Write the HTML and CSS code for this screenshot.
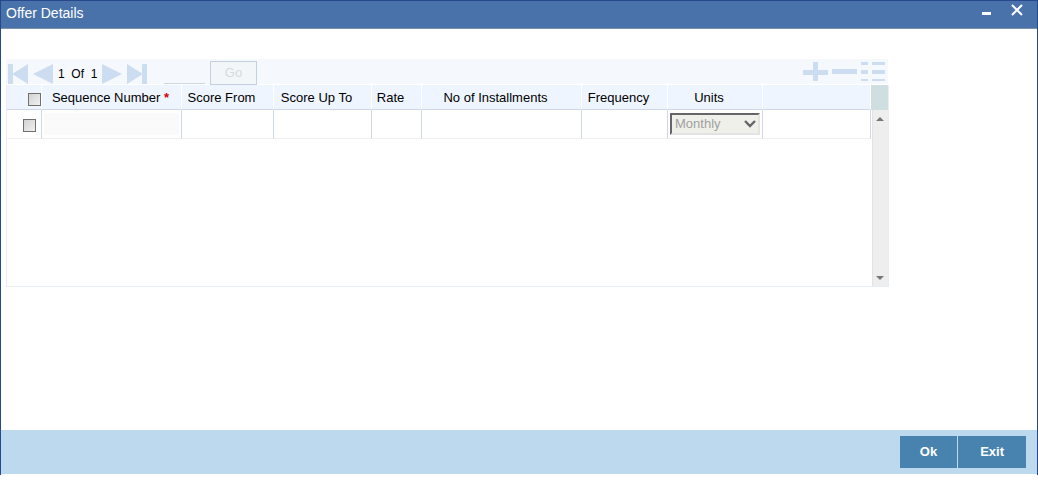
FILE: index.html
```html
<!DOCTYPE html>
<html lang="en">
<head>
  <meta charset="UTF-8" />
  <meta name="viewport" content="width=device-width, initial-scale=1.0"/>
  <title>Offer Details</title>
  <link rel="stylesheet" href="styles.css">
</head>
<body>
  <div class="window">
    <header class="titlebar">
      <h1>Offer Details</h1>
      <div class="win-buttons">
        <button type="button" aria-label="Minimize">
          <svg width="9" height="12" viewBox="0 0 9 12"><path d="M0 8h9v3H0z" fill="#fff"/></svg>
        </button>
        <button type="button" aria-label="Close">
          <svg width="12" height="12" viewBox="0 0 12 12"><path d="M1 1l10 10M11 1L1 11" stroke="#fff" stroke-width="2"/></svg>
        </button>
      </div>
    </header>

    <main class="content">
      <div class="toolbar">
        <div class="pager">
          <button type="button" aria-label="First" disabled>
            <svg width="20" height="20" viewBox="0 0 20 20"><path d="M0 0h5v20H0zM20 0v20L4 10z"/></svg>
          </button>
          <button type="button" aria-label="Previous" disabled>
            <svg width="20" height="20" viewBox="0 0 20 20"><path d="M20 0v20L0 10z"/></svg>
          </button>
          <span class="pages">1&nbsp; Of&nbsp; 1</span>
          <button type="button" aria-label="Next" disabled>
            <svg width="20" height="20" viewBox="0 0 20 20"><path d="M0 0v20l20-10z"/></svg>
          </button>
          <button type="button" aria-label="Last" disabled>
            <svg width="20" height="20" viewBox="0 0 20 20"><path d="M0 0v20l16-10zM15 0h5v20h-5z"/></svg>
          </button>
          <input type="text" class="goto" aria-label="Go to page" disabled>
          <button type="button" class="go" disabled>Go</button>
        </div>
        <div class="row-tools">
          <button type="button" aria-label="Add row" disabled>
            <svg width="25" height="20" viewBox="0 0 25 20"><path d="M10 0h5v8h10v5H15v6h-5v-6H0V8h10z"/></svg>
          </button>
          <button type="button" aria-label="Delete row" disabled>
            <svg width="25" height="20" viewBox="0 0 25 20"><path d="M0 7h25v5H0z"/></svg>
          </button>
          <button type="button" aria-label="Single record view" disabled>
            <svg width="24" height="20" viewBox="0 0 24 20"><path d="M0 0h7v3H0zM11 0h13v3H11zM0 8h7v4H0zM11 8h13v4H11zM0 17h7v2H0zM11 17h13v2H11z"/></svg>
          </button>
        </div>
      </div>

      <div class="grid">
        <table>
          <colgroup>
            <col class="c-check"><col class="c-seq"><col class="c-from"><col class="c-upto"><col class="c-rate">
            <col class="c-inst"><col class="c-freq"><col class="c-units"><col>
          </colgroup>
          <thead>
            <tr>
              <th class="check"><input type="checkbox" aria-label="Select all rows"></th>
              <th class="required">Sequence Number <span>*</span></th>
              <th>Score From</th>
              <th>Score Up To</th>
              <th>Rate</th>
              <th>No of Installments</th>
              <th>Frequency</th>
              <th>Units</th>
              <th></th>
            </tr>
          </thead>
          <tbody>
            <tr>
              <td class="check"><input type="checkbox" aria-label="Select row"></td>
              <td><input type="text" aria-label="Sequence Number" disabled></td>
              <td><input type="text" aria-label="Score From"></td>
              <td><input type="text" aria-label="Score Up To"></td>
              <td><input type="text" aria-label="Rate"></td>
              <td><input type="text" aria-label="No of Installments"></td>
              <td><input type="text" aria-label="Frequency"></td>
              <td>
                <div class="units">
                  <select aria-label="Units" disabled><option>Monthly</option></select>
                  <svg width="12" height="8" viewBox="0 0 12 8"><path d="M1 1l5 5 5-5" fill="none" stroke="#666" stroke-width="2.4"/></svg>
                </div>
              </td>
              <td></td>
            </tr>
          </tbody>
        </table>
        <div class="scroll">
          <div class="scroll-head"></div>
          <div class="scroll-track">
            <svg width="8" height="4" viewBox="0 0 8 4"><path d="M4 0l4 4H0z"/></svg>
            <svg width="8" height="4" viewBox="0 0 8 4"><path d="M0 0h8L4 4z"/></svg>
          </div>
        </div>
      </div>
    </main>

    <footer class="actions">
      <button type="button">Ok</button>
      <button type="button">Exit</button>
    </footer>
  </div>
</body>
</html>
```
FILE: styles.css
```css
:root {
  --icon: #ccdcf1;
  --line: #cfd7e6;
  --edge: #27488a;
}
* { box-sizing: border-box; }
body {
  margin: 0;
  background: #fff; color: #000;
  font: 13px/16px "Liberation Sans", Arial, sans-serif;
}
button, input, select { font: inherit; margin: 0; }
button { padding: 0; border: none; background: none; }
svg { display: block; }

.window {
  display: flex; flex-direction: column;
  min-height: calc(100vh - 8px);
  border: solid var(--edge); border-width: 1px 1px 0;
}

.titlebar {
  display: flex; justify-content: space-between; align-items: flex-start;
  height: 28px; padding: 3px 14px 0 5px;
  background: #4a72aa; border-bottom: 1px solid #7f93a8;
}
.titlebar h1 { margin: 0; font-size: 14px; line-height: 18px; font-weight: normal; color: #fff; }
.win-buttons { display: flex; gap: 20px; }

.content { flex: 1; padding: 30px 5px 20px; }

.toolbar {
  display: flex; justify-content: space-between; align-items: flex-start;
  max-width: 882px; height: 26px; padding: 2px 3px 0 2px;
  background: #f5f9fe; border-bottom: 1px solid #fff;
}
.toolbar svg { fill: var(--icon); }
.pager { display: flex; align-items: flex-start; gap: 5px; }
.pager > button { margin-top: 3px; }
.pages { width: 39px; margin-top: 5px; font-size: 12px; text-align: center; white-space: nowrap; }
.pager .goto {
  width: 41px; height: 23px; margin-left: 12px; padding: 0;
  border: none; border-bottom: 1px solid var(--line); background: transparent;
}
.pager .go {
  width: 47px; height: 24px; margin-top: 0;
  border: 1px solid #c4cfe0; background: #f3f6f9; color: #d5d9de;
}
.row-tools { display: flex; gap: 4px; padding-top: 1px; }

.grid {
  display: flex;
  max-width: 883px; height: 202px;
  border: solid #e8ecf5; border-width: 0 1px 1px;
}
table { flex: 1; align-self: flex-start; table-layout: fixed; border-collapse: separate; border-spacing: 0; }
.c-check { width: 35px; }
.c-seq { width: 140px; }
.c-from { width: 92px; }
.c-upto { width: 98px; }
.c-rate { width: 50px; }
.c-inst { width: 160px; }
.c-freq { width: 86px; }
.c-units { width: 95px; }
th {
  height: 25px; padding: 2px 12px 0 0;
  background: #eef5ff; font-weight: normal; white-space: nowrap;
  border-right: 1px solid #fff; border-bottom: 1px solid var(--line);
}
th.required { padding-right: 2px; }
th.required span { color: #d00000; font-weight: bold; }
td {
  height: 29px; padding: 2px;
  border-right: 1px solid var(--line); border-bottom: 1px solid #f3efee;
}
td input[type="text"] { display: block; width: 100%; height: 22px; border: none; background: #fff; }
td input[type="text"]:disabled { background: #fafafa; }
.check { text-align: left; }
th.check { padding: 4px 0 0 21px; }
td.check { padding: 2px 0 0 16px; }
input[type="checkbox"] {
  display: block; appearance: none;
  width: 13px; height: 13px;
  border: 1px solid #707070; background: linear-gradient(135deg, #d2d2d2, #f0f0f0);
}

.units { position: relative; width: 90px; }
.units select {
  display: block; appearance: none;
  width: 100%; height: 22px; padding: 0 3px;
  border: 2px solid; border-color: #666 #e3e3e3 #e3e3e3 #666; border-radius: 0;
  background: #f0f0ea; color: #a0a0a0; line-height: 18px; opacity: 1;
}
.units svg { position: absolute; right: 4px; top: 7px; pointer-events: none; }

.scroll { display: flex; flex-direction: column; width: 17px; }
.scroll-head { height: 25px; background: #cfdee1; }
.scroll-track {
  flex: 1; display: flex; flex-direction: column; justify-content: space-between; align-items: center;
  margin-left: 1px; padding: 7px 1px 6px 0;
  background: #eee; border-left: 1px solid #e2e2e8;
}
.scroll-track svg { fill: #777; }

.actions {
  display: flex; justify-content: flex-end; gap: 1px;
  height: 44px; margin-bottom: 1px; padding: 6px 11px;
  background: #bcd9ee;
}
.actions button {
  padding: 0 20px;
  background: #4883b0; color: #fff; font-weight: bold;
}
.actions button + button { padding: 0 22px; }
```
